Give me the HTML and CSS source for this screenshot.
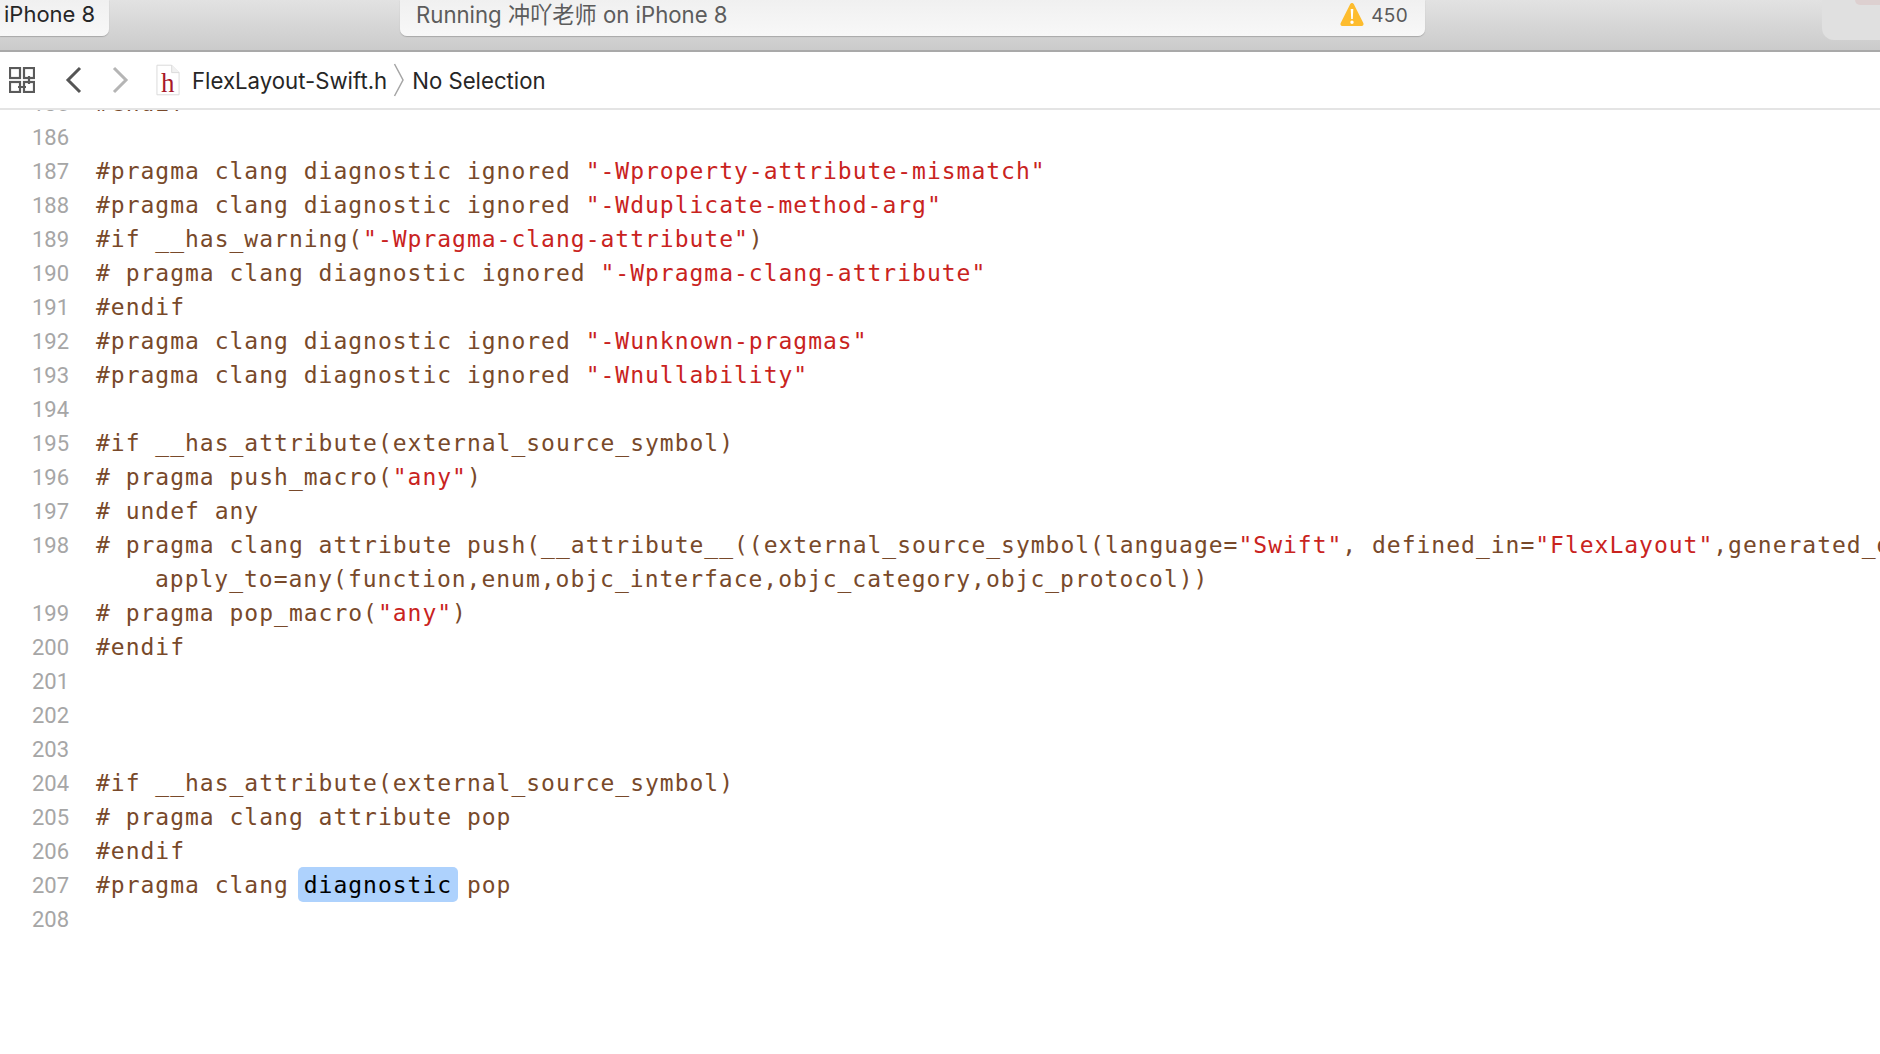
FILE: index.html
```html
<!DOCTYPE html>
<html lang="en">
<head>
<meta charset="utf-8">
<title>FlexLayout-Swift.h</title>
<link rel="stylesheet" href="styles.css">
</head>
<body>
<header class="toolbar">
  <div class="scheme">iPhone 8</div>
  <div class="status">
    <span class="status-text">Running 冲吖老师 on iPhone 8</span>
    <span class="warn">
      <svg class="warn-icon" viewBox="0 0 24 25"><path d="M12 1c.9 0 1.500.5 2 1.500l9.300 18.500c.7 1.400 0 3-1.700 3H2.400c-1.700 0-2.400-1.600-1.700-3L10 2.500C10.500 1.500 11.100 1 12 1z" fill="#fdbc2e"/><path d="M10.700 7h2.600l-.5 10h-1.600zM12 18.500a1.700 1.700 0 1 1 0 3.400 1.700 1.700 0 0 1 0-3.400z" fill="#fff"/></svg>
      <span class="warn-count">450</span>
    </span>
  </div>
  <div class="library"><span class="library-mark"></span></div>
</header>
<nav class="jumpbar">
  <svg class="grid-icon" viewBox="0 0 26 26"><g fill="none" stroke="#5a5a5a" stroke-width="2.200"><rect x="1" y="1" width="10" height="10"/><rect x="15" y="1" width="10" height="10"/><rect x="1" y="15" width="10" height="10"/><rect x="15" y="15" width="10" height="10"/><path d="M9 20h8M20 9v8"/></g></svg>
  <svg class="chev back" viewBox="0 0 18 28"><path d="M15 2 3 14l12 12" fill="none" stroke="#555" stroke-width="3"/></svg>
  <svg class="chev fwd" viewBox="0 0 18 28"><path d="M3 2l12 12L3 26" fill="none" stroke="#b5b5b5" stroke-width="3"/></svg>
  <span class="file-icon">
    <svg class="file-sheet" viewBox="0 0 26 34"><path d="M1 1h16l8 8v24H1z" fill="#fff" stroke="#d8d8d8"/><path d="M17 1v8h8" fill="#f1f1f1" stroke="#d8d8d8"/></svg>
    <span class="file-h">h</span>
  </span>
  <span class="crumb">FlexLayout-Swift.h</span>
  <svg class="sep" viewBox="0 0 12 34"><path d="M1.500 1 10 17 1.500 33" fill="none" stroke="#a5a5a5" stroke-width="1.500"/></svg>
  <span class="crumb">No Selection</span>
</nav>
<main class="editor">
  <div class="lines">
    <div class="line"><span class="num">185</span><code class="code">#endif</code></div>
    <div class="line"><span class="num">186</span><code class="code"></code></div>
    <div class="line"><span class="num">187</span><code class="code">#pragma clang diagnostic ignored <span class="str">"-Wproperty-attribute-mismatch"</span></code></div>
    <div class="line"><span class="num">188</span><code class="code">#pragma clang diagnostic ignored <span class="str">"-Wduplicate-method-arg"</span></code></div>
    <div class="line"><span class="num">189</span><code class="code">#if __has_warning(<span class="str">"-Wpragma-clang-attribute"</span>)</code></div>
    <div class="line"><span class="num">190</span><code class="code"># pragma clang diagnostic ignored <span class="str">"-Wpragma-clang-attribute"</span></code></div>
    <div class="line"><span class="num">191</span><code class="code">#endif</code></div>
    <div class="line"><span class="num">192</span><code class="code">#pragma clang diagnostic ignored <span class="str">"-Wunknown-pragmas"</span></code></div>
    <div class="line"><span class="num">193</span><code class="code">#pragma clang diagnostic ignored <span class="str">"-Wnullability"</span></code></div>
    <div class="line"><span class="num">194</span><code class="code"></code></div>
    <div class="line"><span class="num">195</span><code class="code">#if __has_attribute(external_source_symbol)</code></div>
    <div class="line"><span class="num">196</span><code class="code"># pragma push_macro(<span class="str">"any"</span>)</code></div>
    <div class="line"><span class="num">197</span><code class="code"># undef any</code></div>
    <div class="line"><span class="num">198</span><code class="code"># pragma clang attribute push(__attribute__((external_source_symbol(language=<span class="str">"Swift"</span>, defined_in=<span class="str">"FlexLayout"</span>,generated_declaration))), </code></div>
    <div class="line"><span class="num"></span><code class="code wrapped">apply_to=any(function,enum,objc_interface,objc_category,objc_protocol))</code></div>
    <div class="line"><span class="num">199</span><code class="code"># pragma pop_macro(<span class="str">"any"</span>)</code></div>
    <div class="line"><span class="num">200</span><code class="code">#endif</code></div>
    <div class="line"><span class="num">201</span><code class="code"></code></div>
    <div class="line"><span class="num">202</span><code class="code"></code></div>
    <div class="line"><span class="num">203</span><code class="code"></code></div>
    <div class="line"><span class="num">204</span><code class="code">#if __has_attribute(external_source_symbol)</code></div>
    <div class="line"><span class="num">205</span><code class="code"># pragma clang attribute pop</code></div>
    <div class="line"><span class="num">206</span><code class="code">#endif</code></div>
    <div class="line"><span class="num">207</span><code class="code">#pragma clang <span class="hit">diagnostic</span> pop</code></div>
    <div class="line"><span class="num">208</span><code class="code"></code></div>
  </div>
</main>
</body>
</html>
```
FILE: styles.css
```css
* { box-sizing: border-box; }
html, body { margin: 0; height: 100%; }
body {
  width: 1880px;
  height: 1054px;
  overflow: hidden;
  background: #fff;
  display: flex;
  flex-direction: column;
  font-family: Inter, Roboto, "Noto Sans CJK SC", sans-serif;
}
.toolbar {
  height: 52px;
  flex: none;
  display: flex;
  align-items: flex-start;
  background: linear-gradient(#e2e2e2, #cbcbcb);
  border-bottom: 2px solid #a9a9a9;
}
.scheme {
  width: 109px;
  height: 36px;
  padding: 0 0 8px 4px;
  display: flex;
  align-items: center;
  font-size: 22px;
  color: #262626;
  background: linear-gradient(#f0f0f0, #f8f8f8);
  border-radius: 0 0 7px 0;
  box-shadow: 0 1px 1px #a8a8a8;
}
.status {
  width: 1025px;
  height: 36px;
  margin-left: 291px;
  padding: 0 17px 11px 16px;
  display: flex;
  align-items: center;
  justify-content: space-between;
  background: linear-gradient(#f0f0f0, #f8f8f8);
  border-radius: 0 0 7px 7px;
  box-shadow: 0 1px 1px #a8a8a8;
}
.status-text {
  font-size: 22.2px;
  color: #5c5c5c;
  font-family: Inter, "Noto Sans CJK SC", sans-serif;
}
.warn { display: flex; align-items: center; gap: 7px; }
.warn-icon { width: 24px; height: 25px; margin-top: 3px; }
.warn-count { font-size: 19px; letter-spacing: 0.3px; color: #5a5a5a; margin-top: 5px; }
.library {
  width: 58px;
  height: 40px;
  margin-left: auto;
  padding-left: 33px;
  background: #e0e0e0;
  border-radius: 0 0 0 12px;
}
.library-mark {
  display: block;
  height: 5px;
  background: #ddd0d0;
  border-radius: 0 0 0 6px;
}
.jumpbar {
  height: 58px;
  flex: none;
  display: flex;
  align-items: center;
  padding-left: 9px;
  border-bottom: 2px solid #e4e4e4;
}
.grid-icon { width: 26px; height: 26px; }
.chev { width: 18px; height: 28px; }
.back { margin-left: 30px; }
.fwd { margin-left: 28px; }
.file-icon { position: relative; width: 24px; height: 34px; margin-left: 27px; }
.file-sheet { width: 24px; height: 34px; display: block; }
.file-h {
  position: absolute;
  left: 5px;
  top: 5px;
  font: 27px/30px "Liberation Serif", serif;
  color: #a8182a;
}
.crumb { font-size: 22.2px; color: #262626; margin-left: 12px; }
.sep { width: 12px; height: 34px; margin-left: 6px; margin-right: -5px; }
.editor { flex: 1; overflow: hidden; min-height: 0; }
.lines { margin-top: -24px; }
.line { display: flex; height: 34px; align-items: center; white-space: pre; }
.num {
  flex: none;
  width: 69px;
  text-align: right;
  font: 22px "Liberation Sans Narrow", Roboto, sans-serif;
  color: #a6a6a6;
}
.code {
  margin-left: 27px;
  font: 23px "DejaVu Sans Mono", monospace;
  letter-spacing: 0.990px;
  color: #78492a;
}
.wrapped { margin-left: 86px; }
.str { color: #c9231e; }
.hit {
  color: #000;
  background: #aed2fd;
  border-radius: 5px;
  padding: 5px 6px 4px;
  margin: 0 -6px;
}
```
